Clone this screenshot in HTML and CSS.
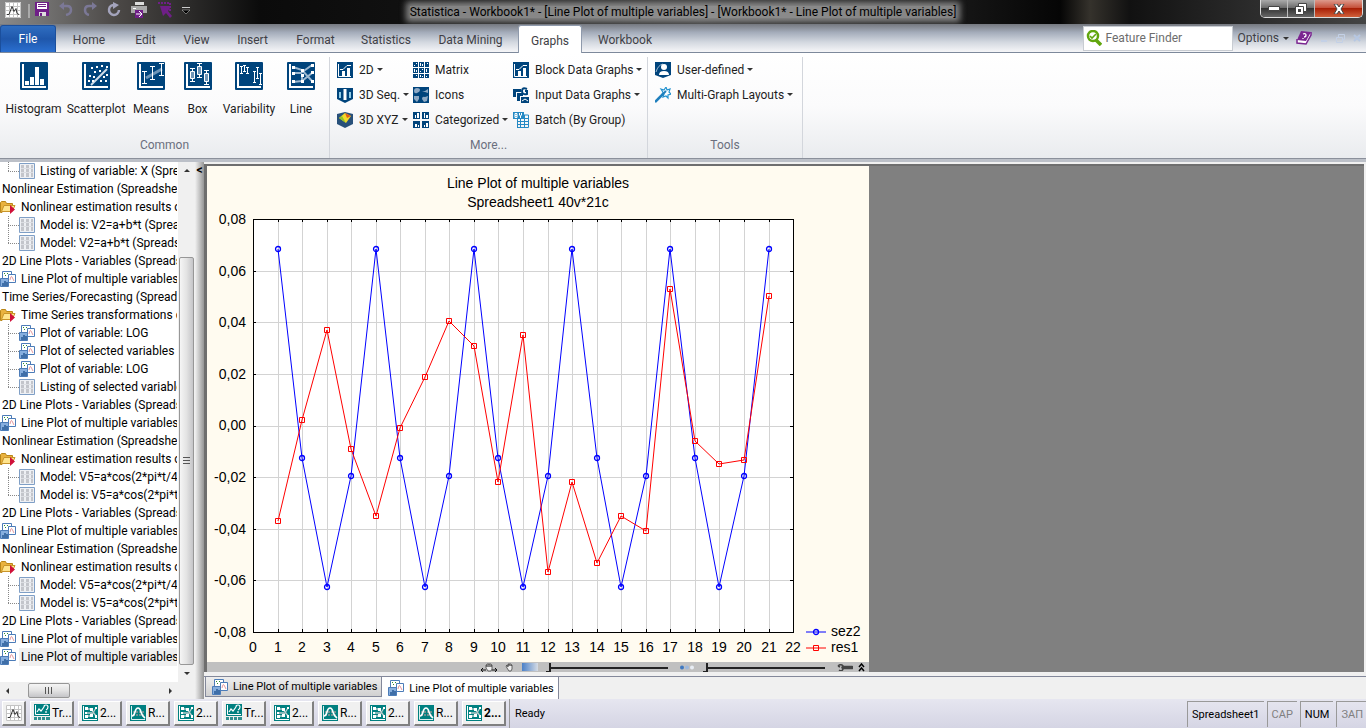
FILE: index.html
```
<!DOCTYPE html>
<html lang="en">
<head>
	<meta charset="utf-8">
	<title>Statistica - Workbook1*</title>
	<link rel="stylesheet" href="styles.css">
</head>
<body>
	<!-- shared icons -->
	<svg class="sprite" aria-hidden="true">
		<symbol id="app" viewBox="0 0 16 16">
			<rect x="0" y="0" width="16" height="16" fill="#fff"/>
			<path d="M.5 .5h15v15H.5zM4.500 0v16M8.500 0v16M12.500 0v16M0 4.500h16M0 8.500h16M0 12.500h16" fill="none" stroke="#c4c4c4"/>
			<path d="M2 12.500h2l3-8 2 5 2-3 1 5 2 1" fill="none" stroke="#333"/>
		</symbol>
		<symbol id="sheet" viewBox="0 0 16 16">
			<path d="M.5 .5h15v15H.5z" fill="#eef0f4" stroke="#7f9fc6"/>
			<path d="M2 2h3v12H2zM7 2h3v12H7zM12 2h2v12h-2z" fill="#c3c5cb"/>
			<path d="M2 5.500h12M2 9.500h12" stroke="#dcdee3"/>
		</symbol>
		<symbol id="folder" viewBox="0 0 16 16">
			<path d="M.5 3.500l1-1h4l1 2h6v3H5l-3 6H.5z" fill="#e9b23f" stroke="#b98619"/>
			<path d="M4 6.500h11l-3 6H1.500z" fill="#ffe48c" stroke="#c8942a"/>
			<path d="M10 6v9l5-4.500z" fill="#d0103a"/>
		</symbol>
		<symbol id="plot" viewBox="0 0 16 16">
			<path d="M2.500 .5h9v9h-9z" fill="#fff" stroke="#4c7cb8"/>
			<path d="M4 2h1v1H4zM7 2h1v1H7zM5 4h1v1H5zM9 4h1v1H9z" fill="#2f8f2f"/>
			<path d="M8.500 3.500h7v8h-7z" fill="#fff" stroke="#4c7cb8"/>
			<path d="M10 9q1-5 2-3t2 4" fill="none" stroke="#e59a9f"/>
			<path d="M.5 7.500h8v8h-8z" fill="#86aede" stroke="#4c7cb8"/>
			<path d="M2 12h2v3H2zM4 10h2v5H4zM6 11h2v4H6z" fill="#3f6fa8"/>
		</symbol>
		<symbol id="t-trend" viewBox="0 0 16 18">
			<path d="M0 0h16v12H0z" fill="#008080"/>
			<path d="M1.500 1v9.500H15" fill="none" stroke="#fff"/>
			<path d="M3 8l2-3 2 2 3-4M10 3q0-2 2-2t2 2-2 3M12 7v2" fill="none" stroke="#fff" stroke-width="1.200"/>
			<path d="M0 13h3v3H0zM4 13h3v3H4zM8 13h3v3H8zM12 13h4v3h-4z" fill="#2f8f8f"/>
		</symbol>
		<symbol id="t-line" viewBox="0 0 16 16">
			<path d="M0 0h16v16H0z" fill="#008080"/>
			<path d="M1.500 1v13.500H15" fill="none" stroke="#fff"/>
			<path d="M4 4h5l5 7M4 11h5l5-8M4 8h6" fill="none" stroke="#b7c9c9" stroke-width="1.300"/>
			<path d="M3 2h3v3H3zM3 7h2v2H3zM3 10h3v3H3zM8 3h3v3H8zM8 9h3v3H8zM13 2h2v2h-2zM13 10h2v3h-2z" fill="#fff"/>
		</symbol>
		<symbol id="t-curve" viewBox="0 0 16 16">
			<path d="M0 0h16v16H0z" fill="#008080"/>
			<path d="M1.500 1v13.500H15" fill="none" stroke="#dcefef"/>
			<path d="M3 7h12M3 10h12" stroke="#6f8f8f" stroke-width="2" stroke-dasharray="2 1"/>
			<path d="M2 11q2 0 3-4t3-4 3 4 4 6" fill="none" stroke="#fff" stroke-width="1.600"/>
		</symbol>
		<symbol id="two-d" viewBox="0 0 16 16">
			<path d="M0 0h16v16H0z" fill="#00447c"/>
			<path d="M1.500 2v12.500H14" fill="none" stroke="#fff"/>
			<path d="M5 9h3v5H5zM10 6h3v8h-3z" fill="#fff"/>
			<path d="M3 7.500h3l4-4h4" fill="none" stroke="#fff"/>
		</symbol>
	</svg>

	<header class="titlebar">
		<div class="quick">
			<button class="tool" aria-label="Statistica"><svg width="16" height="16"><use href="#app"/></svg></button>
			<span class="quick-sep"></span>
			<button class="tool" aria-label="Save"><svg width="14" height="15" viewBox="0 0 14 15"><path d="M0 0h14v14H0z" fill="#6f1f87"/><path d="M2 1h10v6H2z" fill="#fff"/><path d="M3 2.500h8M3 4.500h8" stroke="#6f1f87"/><path d="M4 10h7v4H4z" fill="#ddd"/><path d="M5 11h2v3H5z" fill="#6f1f87"/></svg></button>
			<button class="tool" aria-label="Undo"><svg width="14" height="14" viewBox="0 0 14 14"><path d="M2 4h6q4 0 4 4t-5 5" fill="none" stroke="#7b7896" stroke-width="2.500"/><path d="M0 4l5-4v8z" fill="#7b7896"/></svg></button>
			<button class="tool" aria-label="Redo"><svg width="14" height="14" viewBox="0 0 14 14"><path d="M12 4H6q-4 0-4 4t4 5" fill="none" stroke="#7b7896" stroke-width="2.500"/><path d="M14 4L9 0v8z" fill="#7b7896"/></svg></button>
			<button class="tool" aria-label="Repeat"><svg width="14" height="15" viewBox="0 0 14 15"><path d="M8 3a5 5 0 1 0 4 5" fill="none" stroke="#a3a3bb" stroke-width="2.500"/><path d="M6 0l6 3-6 4z" fill="#a3a3bb"/></svg></button>
			<button class="tool" aria-label="Print"><svg width="16" height="16" viewBox="0 0 16 16"><path d="M0 4h16v7H0z" fill="#a9a9a9"/><path d="M4 0h9v3H4z" fill="#ddd"/><path d="M2 6.500h3" stroke="#fff"/><path d="M4 8h8v8H4z" fill="#6f1f87"/><path d="M5 12h5M8 9l3 3-3 3" fill="none" stroke="#fff"/></svg></button>
			<button class="tool" aria-label="Select"><svg width="15" height="16" viewBox="0 0 15 16"><path d="M1 1h12v8" fill="none" stroke="#6f1f87" stroke-width="2" stroke-dasharray="2 1"/><path d="M3 4h10v2L11 9l4 5-2 2-4-5-3 3z" fill="#6f1f87"/></svg></button>
			<button class="tool more" aria-label="Customize"><svg width="8" height="7" viewBox="0 0 8 7"><path d="M0 .5h8" stroke="#ccc"/><path d="M0 3h8L4 7z" fill="#000" stroke="#ccc" stroke-width=".5"/></svg></button>
		</div>
		<h1 class="title">Statistica - Workbook1* - [Line Plot of multiple variables] - [Workbook1* - Line Plot of multiple variables]</h1>
		<div class="win-buttons">
			<button class="win" aria-label="Minimize"><svg width="12" height="5" viewBox="0 0 12 5"><path d="M.5 .5h11v4H.5z" fill="#fff" stroke="#444"/></svg></button>
			<button class="win" aria-label="Restore"><svg width="12" height="12" viewBox="0 0 12 12"><path d="M3.500 .5h8v8h-8z" fill="#fff" stroke="#444"/><path d="M.5 3.500h8v8h-8z" fill="#fff" stroke="#444"/><path d="M3 6h3v3H3z" fill="#444"/></svg></button>
			<button class="win win-close" aria-label="Close"><svg width="12" height="10" viewBox="0 0 12 10"><path d="M1 0h3l2 3 2-3h3L8 5l3 5H8L6 7l-2 3H1l3-5z" fill="#fff" stroke="#444"/></svg></button>
		</div>
	</header>

	<nav class="tabs">
		<div class="tab-list">
			<button class="tab tab-file">File</button>
			<button class="tab">Home</button>
			<button class="tab">Edit</button>
			<button class="tab">View</button>
			<button class="tab">Insert</button>
			<button class="tab">Format</button>
			<button class="tab">Statistics</button>
			<button class="tab">Data Mining</button>
			<button class="tab tab-active">Graphs</button>
			<button class="tab">Workbook</button>
		</div>
		<div class="tab-tools">
			<label class="finder">
				<svg width="16" height="16" viewBox="0 0 16 16"><circle cx="7" cy="6" r="5" fill="#fff" stroke="#61a60e" stroke-width="2.500"/><path d="M10 10l5 5" stroke="#61a60e" stroke-width="3.500"/><path d="M4 6l2 2 4-4" fill="none" stroke="#61a60e" stroke-width="1.600"/></svg>
				<input type="text" placeholder="Feature Finder" aria-label="Feature Finder">
			</label>
			<button class="options">Options<i class="caret"></i></button>
			<button class="tool" aria-label="Help"><svg width="16" height="14" viewBox="0 0 16 14"><path d="M1 8v4l9 1 5-9V1" fill="#fff" stroke="#7a2590" stroke-width="1.500"/><path d="M5 0l10 1-5 9-9-1z" fill="#7a2590"/><path d="M7 3q3-1 3 1t-2 2M7 7v1" fill="none" stroke="#fff" stroke-width="1.300"/></svg></button>
			<button class="tool child" aria-label="Minimize document"><svg width="8" height="9" viewBox="0 0 8 9"><path d="M1 7h6" stroke="#c3d0e6" stroke-width="2"/></svg></button>
			<button class="tool child" aria-label="Restore document"><svg width="9" height="9" viewBox="0 0 9 9"><path d="M2.500 3V.5h6v5H6M.5 3.500h6v5h-6z" fill="none" stroke="#c3d0e6"/></svg></button>
			<button class="tool child" aria-label="Close document"><svg width="8" height="8" viewBox="0 0 8 8"><path d="M1 1l6 6M7 1L1 7" stroke="#b6c7e2" stroke-width="2"/></svg></button>
		</div>
	</nav>

	<section class="ribbon">
		<div class="group group-common">
			<div class="big-row">
				<button class="big">
					<svg width="28" height="28" viewBox="0 0 28 28"><rect width="28" height="28" rx="1" fill="#00447c"/><path d="M3 2v23h23" fill="none" stroke="#fff" stroke-width="2"/><path d="M5 19h4v4H5zM10 15h4v8h-4zM15 5h4v18h-4zM20 17h4v6h-4z" fill="#fff"/></svg>
					<span>Histogram</span>
				</button>
				<button class="big">
					<svg width="28" height="28" viewBox="0 0 28 28"><rect width="28" height="28" rx="1" fill="#00447c"/><path d="M3 2v23h23" fill="none" stroke="#fff" stroke-width="2"/><path d="M9 23L25 7" stroke="#cfdde9" stroke-width="2"/><path d="M9 5h2v2H9zM14 4h2v2h-2zM19 3h2v2h-2zM24 4h2v2h-2zM12 9h2v2h-2zM17 8h2v2h-2zM7 13h2v2H7zM11 14h2v2h-2zM6 18h2v2H6zM10 18h2v2h-2zM18 18h2v2h-2zM21 14h2v2h-2zM24 12h2v2h-2zM23 18h2v2h-2z" fill="#fff"/></svg>
					<span>Scatterplot</span>
				</button>
				<button class="big">
					<svg width="28" height="28" viewBox="0 0 28 28"><rect width="28" height="28" rx="1" fill="#00447c"/><path d="M3 2v23h23" fill="none" stroke="#fff" stroke-width="2"/><path d="M9 16l16-9" stroke="#6f96b8" stroke-width="3"/><path d="M5 9.500h5M5 21.500h5M7.500 9v12M13 4.500h5M13 17.500h5M15.500 4v13M22 1.500h5M22 13.500h5M24.500 1v12" stroke="#fff"/></svg>
					<span>Means</span>
				</button>
				<button class="big">
					<svg width="28" height="28" viewBox="0 0 28 28"><rect width="28" height="28" rx="1" fill="#00447c"/><path d="M3 2v23h23" fill="none" stroke="#fff" stroke-width="2"/><path d="M6 6.500h5M6 19.500h5M8.500 6v13M13 1.500h5M13 15.500h5M15.500 1v14M20 8.500h5M20 22.500h5M22.500 8v14" stroke="#fff"/><path d="M6.500 9.500h4v7h-4zM13.500 4.500h4v8h-4zM20.500 11.500h4v8h-4z" fill="#6f96b8" stroke="#fff"/></svg>
					<span>Box</span>
				</button>
				<button class="big">
					<svg width="28" height="28" viewBox="0 0 28 28"><rect width="28" height="28" rx="1" fill="#00447c"/><path d="M3 2v23h23" fill="none" stroke="#fff" stroke-width="2"/><path d="M5 4.500h3M5 11.500h3M6.500 4v7M8 3.500h3M8 9.500h3M9.500 3v7M11 5.500h3M11 11.500h3M12.500 5v7M18 9.500h3M18 20.500h3M19.500 9v12M21 5.500h3M21 16.500h3M22.500 5v12M24 11.500h3M24 22.500h3M25.500 11v12" stroke="#fff"/></svg>
					<span>Variability</span>
				</button>
				<button class="big">
					<svg width="28" height="28" viewBox="0 0 28 28"><rect width="28" height="28" rx="1" fill="#00447c"/><path d="M3 2v23h23" fill="none" stroke="#fff" stroke-width="2"/><path d="M6 5l9 3 10 11M6 11h8l11-8M6 20l9-1 10-8M15 12l0 7" fill="none" stroke="#9cb8d0" stroke-width="2"/><path d="M5 4h3v3H5zM5 10h3v3H5zM5 18h3v3H5zM14 7h3v3h-3zM14 12h3v3h-3zM14 18h3v3h-3zM24 2h3v3h-3zM24 9h3v3h-3zM24 18h3v3h-3z" fill="#fff"/></svg>
					<span>Line</span>
				</button>
			</div>
			<h2>Common</h2>
		</div>
		<div class="group group-more">
			<div class="small-grid">
				<button class="small"><svg width="16" height="16"><use href="#two-d"/></svg>2D<i class="caret"></i></button>
				<button class="small"><svg width="16" height="16" viewBox="0 0 16 16"><path d="M0 0h5v5H0zM6 0h5v5H6zM12 0h4v5h-4zM0 6h5v5H0zM6 6h5v5H6zM12 6h4v5h-4zM0 12h5v4H0zM6 12h5v4H6zM12 12h4v4h-4z" fill="#00447c"/><path d="M3 1h1v1H3zM1 3h1v1H1zM7 1h1v3H7zM9 2h1v2H9zM14 1h1v1h-1zM1 7h1v3H1zM3 8h1v2H3zM9 7h1v1H9zM7 9h1v1H7zM13 7h1v3h-1zM3 13h1v1H3zM7 13h1v2H7zM9 14h1v1H9zM13 14h1v1h-1z" fill="#fff"/></svg>Matrix</button>
				<button class="small"><svg width="16" height="16"><use href="#two-d"/></svg>Block Data Graphs<i class="caret"></i></button>
				<button class="small"><svg width="16" height="16" viewBox="0 0 16 16"><path d="M0 1h16v11l-8 4-8-4z" fill="#00447c"/><path d="M3 5v6M13 5v6" stroke="#8fcbe6" stroke-width="2"/><path d="M8 2v11" stroke="#fff" stroke-width="3"/></svg>3D Seq.<i class="caret"></i></button>
				<button class="small"><svg width="16" height="16" viewBox="0 0 16 16"><path d="M0 0h16v16H0z" fill="#00447c"/><path d="M1 4q0-3 3-3t3 2-3 3-3-2M9 4h3l3-2v4l-3-1zM1 9h5v3l-2 3-3-3zM9 12q0-3 3-2l3-1-1 5-3 1z" fill="#8ea9c4"/></svg>Icons</button>
				<button class="small"><svg width="16" height="16" viewBox="0 0 16 16"><path d="M0 2h8v3H3v5H0zM4 6h6v3H7v5H4zM8 10h8v6H8z" fill="#00447c"/><path d="M14 2q-5-2-5 2t5 3V4h-2" fill="none" stroke="#00447c" stroke-width="2"/><path d="M9 14l3-2 3 2" fill="none" stroke="#fff"/></svg>Input Data Graphs<i class="caret"></i></button>
				<button class="small"><svg width="16" height="16" viewBox="0 0 16 16"><path d="M0 2l8-2 8 2v10l-8 4-8-4z" fill="#28507a"/><path d="M2 6l6-5 6 3-5 7z" fill="#f4d92a"/><path d="M8 1l6 3-4 2z" fill="#e0601c"/><path d="M2 6l3-2 4 7z" fill="#8fc42c"/></svg>3D XYZ<i class="caret"></i></button>
				<button class="small"><svg width="16" height="16" viewBox="0 0 16 16"><path d="M0 0h7v7H0zM9 0h7v7H9zM0 9h7v7H0zM9 9h7v7H9z" fill="#00447c"/><path d="M2 3h1v3H2zM4 1h2v5H4zM11 1h1v5h-1zM13 3h2v3h-2zM2 12h2v3H2zM5 13h1v2H5zM11 13h1v2h-1zM13 11h2v4h-2z" fill="#fff"/></svg>Categorized<i class="caret"></i></button>
				<button class="small"><svg width="16" height="16" viewBox="0 0 16 16"><path d="M4 3h11.500v12.500H4M4 6.500h11M4 9.500h11M4 12.500h11M7.500 3v12M11.500 3v12M4.500 7v8" fill="none" stroke="#2589c4"/><path d="M0 0h11v7H0z" fill="#2589c4"/><path d="M2 1.500h2v4H2zM2 3.500h2M6.500 1v2l1 1 1-1V1M7.500 4v2" fill="none" stroke="#fff"/></svg>Batch (By Group)</button>
			</div>
			<h2>More...</h2>
		</div>
		<div class="group group-tools">
			<div class="small-list">
				<button class="small"><svg width="16" height="16" viewBox="0 0 16 16"><path d="M0 0h16v13l-8 3-8-3z" fill="#00447c"/><path d="M1 10q2-7 7-8" fill="none" stroke="#9cb8d0"/><circle cx="9" cy="5" r="3" fill="#fff"/><path d="M4 13q0-4 5-4t5 4z" fill="#fff"/></svg>User-defined<i class="caret"></i></button>
				<button class="small"><svg width="16" height="16" viewBox="0 0 16 16"><path d="M0 15l9-9" stroke="#1f7fbd" stroke-width="2.500"/><path d="M6 2l3 1 2-3 1 3 3-1-1 3 2 2-3 1v3l-2-2-3 1 1-3z" fill="#fff" stroke="#2593cf" stroke-width="1.200"/><path d="M7 8l4-4" stroke="#1f7fbd" stroke-width="2"/></svg>Multi-Graph Layouts<i class="caret"></i></button>
			</div>
			<h2>Tools</h2>
		</div>
	</section>

	<main class="workspace">
		<aside class="side">
			<ul class="tree">
				<li class="leaf last"><i class="branch"></i><svg><use href="#sheet"/></svg>Listing of variable: X (Spre</li>
				<li class="root">Nonlinear Estimation (Spreadshee</li>
				<li><svg><use href="#folder"/></svg>Nonlinear estimation results o</li>
				<li class="leaf"><i class="branch"></i><svg><use href="#sheet"/></svg>Model is: V2=a+b*t (Sprea</li>
				<li class="leaf last"><i class="branch"></i><svg><use href="#sheet"/></svg>Model: V2=a+b*t (Spreads</li>
				<li class="root">2D Line Plots - Variables (Spreads</li>
				<li><svg><use href="#plot"/></svg>Line Plot of multiple variables</li>
				<li class="root">Time Series/Forecasting (Spreads</li>
				<li><svg><use href="#folder"/></svg>Time Series transformations d</li>
				<li class="leaf"><i class="branch"></i><svg><use href="#plot"/></svg>Plot of variable: LOG</li>
				<li class="leaf"><i class="branch"></i><svg><use href="#plot"/></svg>Plot of selected variables (</li>
				<li class="leaf"><i class="branch"></i><svg><use href="#plot"/></svg>Plot of variable: LOG</li>
				<li class="leaf last"><i class="branch"></i><svg><use href="#sheet"/></svg>Listing of selected variable</li>
				<li class="root">2D Line Plots - Variables (Spreads</li>
				<li><svg><use href="#plot"/></svg>Line Plot of multiple variables</li>
				<li class="root">Nonlinear Estimation (Spreadshee</li>
				<li><svg><use href="#folder"/></svg>Nonlinear estimation results o</li>
				<li class="leaf"><i class="branch"></i><svg><use href="#sheet"/></svg>Model: V5=a*cos(2*pi*t/4)</li>
				<li class="leaf last"><i class="branch"></i><svg><use href="#sheet"/></svg>Model is: V5=a*cos(2*pi*t/</li>
				<li class="root">2D Line Plots - Variables (Spreads</li>
				<li><svg><use href="#plot"/></svg>Line Plot of multiple variables</li>
				<li class="root">Nonlinear Estimation (Spreadshee</li>
				<li><svg><use href="#folder"/></svg>Nonlinear estimation results o</li>
				<li class="leaf"><i class="branch"></i><svg><use href="#sheet"/></svg>Model: V5=a*cos(2*pi*t/4)</li>
				<li class="leaf last"><i class="branch"></i><svg><use href="#sheet"/></svg>Model is: V5=a*cos(2*pi*t/</li>
				<li class="root">2D Line Plots - Variables (Spreads</li>
				<li><svg><use href="#plot"/></svg>Line Plot of multiple variables</li>
				<li><svg><use href="#plot"/></svg><span class="selected">Line Plot of multiple variables</span></li>
			</ul>
			<div class="vbar">
				<i class="arrow up"></i>
				<div class="vtrack"><div class="vthumb"><i class="grip"></i></div></div>
				<i class="arrow down"></i>
			</div>
			<div class="hbar">
				<i class="arrow left"></i>
				<div class="htrack"><div class="hthumb"><i class="grip grip-h"></i></div></div>
				<i class="arrow right"></i>
			</div>
		</aside>
		<button class="splitter" aria-label="Collapse tree">&lt;</button>
		<section class="document">
			<div class="canvas">
				<div class="graph">
					<svg class="chart" width="662" height="496" viewBox="0 0 662 496">
						<defs>
							<marker id="dot" markerWidth="8" markerHeight="8" refX="4" refY="4" markerUnits="userSpaceOnUse"><circle cx="4" cy="4" r="2.500" fill="none" stroke="#00f" stroke-width="1.300"/></marker>
							<marker id="box" markerWidth="8" markerHeight="8" refX="4" refY="4" markerUnits="userSpaceOnUse"><path d="M1.500 1.500h5v5h-5z" fill="none" stroke="#f00"/></marker>
						</defs>
						<g class="chart-title">
							<text x="331" y="22">Line Plot of multiple variables</text>
							<text x="331" y="41">Spreadsheet1 40v*21c</text>
						</g>
						<path class="area" d="M46 53h540v413H46z"/>
						<path class="grid-lines" d="M71 53v413M95 53v413M120 53v413M144 53v413M169 53v413M193 53v413M218 53v413M242 53v413M267 53v413M291 53v413M316 53v413M341 53v413M365 53v413M390 53v413M414 53v413M439 53v413M463 53v413M488 53v413M512 53v413M537 53v413M562 53v413M46 105h540M46 156h540M46 208h540M46 260h540M46 311h540M46 363h540M46 414h540"/>
						<path class="frame" d="M46 53h540v413H46z"/>
						<path class="frame" d="M71 463v3M95 463v3M120 463v3M144 463v3M169 463v3M193 463v3M218 463v3M242 463v3M267 463v3M291 463v3M316 463v3M341 463v3M365 463v3M390 463v3M414 463v3M439 463v3M463 463v3M488 463v3M512 463v3M537 463v3M562 463v3M71 53v3M95 53v3M120 53v3M144 53v3M169 53v3M193 53v3M218 53v3M242 53v3M267 53v3M291 53v3M316 53v3M341 53v3M365 53v3M390 53v3M414 53v3M439 53v3M463 53v3M488 53v3M512 53v3M537 53v3M562 53v3M46 105h3M46 156h3M46 208h3M46 260h3M46 311h3M46 363h3M46 414h3M583 105h3M583 156h3M583 208h3M583 260h3M583 311h3M583 363h3M583 414h3"/>
						<polyline class="sez" points="71,83 95,292 120,421 144,310 169,83 193,292 218,421 242,310 267,83 291,292 316,421 341,310 365,83 390,292 414,421 439,310 463,83 488,292 512,421 537,310 562,83"/>
						<polyline class="res" points="71,355 95,254 120,164 144,283 169,350 193,262 218,211 242,155 267,180 291,316 316,169 341,406 365,316 390,397 414,350 439,365 463,123 488,275 512,298 537,294 562,130"/>
						<g class="y-labels">
							<text x="39" y="58">0,08</text>
							<text x="39" y="110">0,06</text>
							<text x="39" y="161">0,04</text>
							<text x="39" y="213">0,02</text>
							<text x="39" y="264">0,00</text>
							<text x="39" y="316">-0,02</text>
							<text x="39" y="368">-0,04</text>
							<text x="39" y="419">-0,06</text>
							<text x="39" y="471">-0,08</text>
						</g>
						<g class="x-labels">
							<text x="46" y="486">0</text><text x="71" y="486">1</text><text x="95" y="486">2</text><text x="120" y="486">3</text>
							<text x="144" y="486">4</text><text x="169" y="486">5</text><text x="193" y="486">6</text><text x="218" y="486">7</text>
							<text x="242" y="486">8</text><text x="267" y="486">9</text><text x="291" y="486">10</text><text x="316" y="486">11</text>
							<text x="341" y="486">12</text><text x="365" y="486">13</text><text x="390" y="486">14</text><text x="414" y="486">15</text>
							<text x="439" y="486">16</text><text x="463" y="486">17</text><text x="488" y="486">18</text><text x="512" y="486">19</text>
							<text x="537" y="486">20</text><text x="562" y="486">21</text><text x="586" y="486">22</text>
						</g>
						<polyline class="sez legend-line" points="599,466 609,466 619,466"/>
						<polyline class="res legend-line" points="599,482 609,482 619,482"/>
						<text x="624" y="470">sez2</text>
						<text x="624" y="486">res1</text>
					</svg>
					<div class="graph-tools">
						<button class="tool" aria-label="Pan"><svg width="16" height="9" viewBox="0 0 16 9"><path d="M5 5V2h1v2V1h2v3V1h2v3V2h1v4l-1 2H7z" fill="#eee" stroke="#444" stroke-width=".8"/><path d="M0 7h5M11 7h5M2 5L0 7l2 2M14 5l2 2-2 2" fill="none" stroke="#111"/></svg></button>
						<button class="tool hand" aria-label="Hand"><svg width="9" height="9" viewBox="0 0 9 9"><path d="M2 5L1 3l1-1 1 2V1h1v2-2h2v2-1h1v4L6 8H4z" fill="#eee" stroke="#444" stroke-width=".8"/></svg></button>
						<span class="shade"></span>
						<input class="slider" type="range" value="0" aria-label="Transparency">
						<svg class="dots" width="15" height="5" viewBox="0 0 15 5"><circle cx="2" cy="2.500" r="2" fill="#3f78c0"/><circle cx="7" cy="2.500" r="2" fill="#9db8dc"/><circle cx="12" cy="2.500" r="2" fill="#e8edf4"/></svg>
						<input class="slider" type="range" value="0" aria-label="Density">
						<button class="tool wrench" aria-label="Settings"><svg width="16" height="7" viewBox="0 0 16 7"><path d="M6 3.500h9" stroke="#444" stroke-width="3.500" stroke-linecap="round"/><path d="M1 2q2-2 4-1t1 4-4 1M1 2l2 1" fill="none" stroke="#444" stroke-width="1.500"/></svg></button>
						<button class="tool" aria-label="Collapse"><svg width="7" height="9" viewBox="0 0 7 9"><path d="M1 4l2.500-3L6 4M1 8l2.500-3L6 8" fill="none" stroke="#000" stroke-width="1.500"/></svg></button>
					</div>
				</div>
			</div>
			<div class="doc-tabs">
				<button class="doc-tab"><svg width="16" height="16"><use href="#plot"/></svg>Line Plot of multiple variables</button>
				<button class="doc-tab doc-active"><svg width="16" height="16"><use href="#plot"/></svg>Line Plot of multiple variables</button>
			</div>
		</section>
	</main>

	<footer class="status">
		<button class="task task-app" aria-label="Statistica"><svg width="16" height="16"><use href="#app"/></svg></button>
		<button class="task"><svg width="16" height="18"><use href="#t-trend"/></svg>Tr...</button>
		<button class="task"><svg width="16" height="16"><use href="#t-line"/></svg>2...</button>
		<button class="task"><svg width="16" height="16"><use href="#t-curve"/></svg>R...</button>
		<button class="task"><svg width="16" height="16"><use href="#t-line"/></svg>2...</button>
		<button class="task"><svg width="16" height="18"><use href="#t-trend"/></svg>Tr...</button>
		<button class="task"><svg width="16" height="16"><use href="#t-line"/></svg>2...</button>
		<button class="task"><svg width="16" height="16"><use href="#t-curve"/></svg>R...</button>
		<button class="task"><svg width="16" height="16"><use href="#t-line"/></svg>2...</button>
		<button class="task"><svg width="16" height="16"><use href="#t-curve"/></svg>R...</button>
		<button class="task task-current"><svg width="16" height="16"><use href="#t-line"/></svg>2...</button>
		<span class="ready">Ready</span>
		<span class="pane">Spreadsheet1</span>
		<span class="pane off">CAP</span>
		<span class="pane">NUM</span>
		<span class="pane off">ЗАП</span>
	</footer>
</body>
</html>
```
FILE: styles.css
```
*{
	margin: 0;
	padding: 0;
	box-sizing: border-box;
}
body{
	display: flex;
	flex-direction: column;
	height: 100vh;
	overflow: hidden;
	font: 12px Roboto, "Open Sans", sans-serif;
	color: #1e1e1e;
	background: #f0f0f0;
}
button{
	font: inherit;
	color: inherit;
	background: none;
	border: 0;
	white-space: nowrap;
}
svg{
	display: block;
	flex: none;
}
.sprite{
	position: absolute;
	width: 0;
	height: 0;
}
.caret{
	display: inline-block;
	border: solid 3px transparent;
	border-top-color: #333;
	border-bottom: 0;
}

/* title bar */
.titlebar{
	display: grid;
	grid-template-columns: 1fr auto 1fr;
	height: 24px;
	background: linear-gradient(90deg, #8a8a8a 0, #4a4745 120px, #2b2a29 190px, #0b0b0b 260px, #111 420px, #333 700px, #161616 960px, #050505 1060px, #35322c 1090px, #111 1130px, #444 100%);
}
.quick{
	display: flex;
	align-items: flex-start;
	gap: 10px;
	padding: 2px 0 0 5px;
}
.quick-sep{
	width: 2px;
	height: 14px;
	margin: 2px -5px 0 -3px;
	background: #aaa;
}
.more{
	margin-top: 5px;
}
.title{
	align-self: center;
	height: 12px;
	font-size: 12px;
	font-weight: normal;
	line-height: 12px;
	white-space: nowrap;
	color: #000;
	background: rgba(180,180,180,.7);
	box-shadow: 0 0 6px 4px rgba(180,180,180,.7);
}
.win-buttons{
	display: flex;
	justify-self: end;
	height: 18px;
	margin-right: 3px;
	border: solid 1px #ddd;
	border-top: 0;
	border-radius: 0 0 5px 5px;
	overflow: hidden;
}
.win{
	display: grid;
	place-items: center;
	width: 27px;
	border-right: solid 1px #bbb;
	background: linear-gradient(#aaa, #666 50%, #333 50%, #666);
}
.win-close{
	width: 47px;
	border-right: 0;
	background: linear-gradient(#dd9a8c, #c5503a 45%, #a81f06 50%, #d0603a);
}

/* ribbon tabs */
.tabs{
	display: flex;
	justify-content: space-between;
	height: 29px;
	border-bottom: solid 1px #7d899b;
	background: linear-gradient(#75787f, #a4acba 30%, #d3d8e0 65%, #f6f6f8);
	color: #3f3f46;
}
.tab-list{
	display: grid;
	grid-template-columns: 57px 64px 49px 53px 59px 67px 74px 95px 64px 86px;
	padding-top: 1px;
}
.tab{
	padding-top: 2px;
}
.tab-file{
	margin-right: 1px;
	padding: 0;
	color: #fff;
	border: solid 1px #1b4f9c;
	border-bottom: 0;
	border-radius: 3px 3px 0 0;
	background: linear-gradient(#2f6dc0, #1f57ab 50%, #2a6fd0);
}
.tab-active{
	margin-bottom: -1px;
	border: solid 1px #8f9aac;
	border-bottom: 0;
	border-radius: 3px 3px 0 0;
	background: #fff;
}
.tab-tools{
	display: flex;
	align-items: center;
	gap: 4px;
	padding-right: 5px;
}
.finder{
	display: flex;
	align-items: center;
	gap: 3px;
	width: 150px;
	height: 25px;
	padding-left: 2px;
	border: solid 1px #c8ccd2;
	background: #fff;
}
.finder input{
	width: 120px;
	border: 0;
	outline: 0;
	font: inherit;
	background: none;
}
.finder input::placeholder{
	color: #6d6d6d;
	opacity: 1;
}
.options{
	display: flex;
	align-items: center;
	gap: 4px;
	margin-right: 3px;
}
.child{
	margin-left: 4px;
}

/* ribbon */
.ribbon{
	display: flex;
	height: 109px;
	padding: 4px 0 0;
	border-bottom: solid 3px #bcc0c8;
	box-shadow: inset 0 -1px #8b909b;
	background: linear-gradient(#fff, #fbfbfc 50%, #e9ebee);
}
.group{
	display: flex;
	flex-direction: column;
	justify-content: space-between;
	border-right: solid 1px #d3d6dc;
	margin-bottom: 1px;
}
.group h2{
	padding-bottom: 4px;
	font-size: 12px;
	font-weight: normal;
	line-height: 18px;
	text-align: center;
	color: #6b6f7e;
}
.group-common{
	width: 330px;
}
.group-more{
	width: 318px;
}
.group-tools{
	width: 155px;
}
.big-row{
	display: grid;
	grid-template-columns: 61px 64px 46px 47px 56px 48px;
	padding: 5px 0 0 3px;
}
.big{
	display: flex;
	flex-direction: column;
	align-items: center;
	gap: 10px;
	line-height: 18px;
}
.small-grid{
	display: grid;
	grid-template-columns: 76px 100px auto;
	grid-auto-rows: 25px;
	padding-left: 7px;
}
.small-list{
	display: grid;
	grid-auto-rows: 25px;
	padding-left: 7px;
}
.small{
	display: flex;
	align-items: center;
	text-align: left;
}
.small svg{
	margin-right: 6px;
}
.small .caret{
	margin-left: 3px;
}

/* tree */
.workspace{
	display: flex;
	flex: 1;
	min-height: 0;
}
.side{
	display: grid;
	grid-template-columns: 178px 17px;
	grid-template-rows: 1fr 17px;
	color: #000;
	background: #fff;
}
.tree{
	list-style: none;
	overflow: hidden;
	min-height: 0;
	padding-right: 1px;
}
.tree li{
	display: flex;
	align-items: center;
	height: 18px;
	overflow: hidden;
	white-space: nowrap;
}
.tree svg{
	width: 16px;
	height: 16px;
	margin-right: 5px;
}
.tree .root{
	padding-left: 2px;
}
.branch{
	flex: none;
	width: 11px;
	height: 18px;
	margin-left: 8px;
	background: repeating-linear-gradient(90deg, #888 0 1px, transparent 1px 2px) 0 9px / 11px 1px no-repeat, repeating-linear-gradient(#888 0 1px, transparent 1px 2px) 0 0 / 1px 18px no-repeat;
}
.last .branch{
	background-size: 11px 1px, 1px 9px;
}
.selected{
	flex: 1;
	margin-left: -2px;
	padding-left: 2px;
	line-height: 18px;
	background: #f0f0f0;
}
.vbar{
	display: flex;
	flex-direction: column;
	align-items: center;
	background: #f0f0f0;
}
.vtrack{
	flex: 1;
	width: 15px;
	display: flex;
	flex-direction: column;
	justify-content: flex-end;
}
.vthumb{
	display: grid;
	place-items: center;
	height: 84%;
	border: solid 1px #979797;
	border-radius: 2px;
	background: linear-gradient(90deg, #f5f5f5, #e3e3e3 50%, #c5c5c8);
}
.grip{
	width: 7px;
	height: 8px;
	background: repeating-linear-gradient(#555 0 1px, transparent 1px 3px);
}
.grip-h{
	width: 8px;
	height: 7px;
	background: repeating-linear-gradient(90deg, #555 0 1px, transparent 1px 3px);
}
.arrow{
	margin: 7px 6px;
	border: solid 3px transparent;
}
.up{
	border-top: 0;
	border-bottom-color: #333;
}
.down{
	border-bottom: 0;
	border-top-color: #333;
}
.left{
	margin: 5px 6px;
	border-left: 0;
	border-right-color: #333;
}
.right{
	margin: 5px 6px;
	border-right: 0;
	border-left-color: #333;
}
.hbar{
	grid-column: 1 / 3;
	display: flex;
	align-items: center;
	padding-right: 17px;
	background: #f0f0f0;
}
.htrack{
	flex: 1;
	padding-left: 13px;
}
.hthumb{
	display: grid;
	place-items: center;
	width: 42px;
	height: 15px;
	border: solid 1px #979797;
	border-radius: 2px;
	background: linear-gradient(#f5f5f5, #e3e3e3 50%, #c5c5c8);
}
.splitter{
	display: flex;
	justify-content: center;
	width: 9px;
	color: #000;
	font-weight: bold;
	line-height: 16px;
	background: linear-gradient(90deg, #f0f0f0, #c4c4c4 50%, #959595);
}

/* document */
.document{
	display: flex;
	flex: 1;
	flex-direction: column;
	min-width: 0;
}
.canvas{
	flex: 1;
	min-height: 0;
	overflow: hidden;
	margin: 2px 2px 4px 0;
	border: solid #6e6e6e;
	border-width: 2px 0 0 3px;
	background: #808080;
}
.graph{
	width: 662px;
}
.chart{
	background: #fffbf0;
	font: 14px "Liberation Sans", Arial, sans-serif;
	fill: #000;
}
.chart-title,
.x-labels{
	text-anchor: middle;
}
.y-labels{
	text-anchor: end;
}
.area{
	fill: #fff;
}
.grid-lines{
	stroke: #d3d3d3;
	shape-rendering: crispEdges;
}
.frame{
	fill: none;
	stroke: #000;
	shape-rendering: crispEdges;
}
.sez{
	fill: none;
	stroke: #00f;
	marker: url(#dot);
}
.res{
	fill: none;
	stroke: #f00;
	marker: url(#box);
}
.legend-line{
	marker-start: none;
	marker-end: none;
}
.graph-tools{
	display: flex;
	align-items: center;
	justify-content: flex-end;
	height: 10px;
	padding-right: 4px;
	background: #c0c0c0;
}
.hand{
	margin: 0 8px;
}
.shade{
	width: 16px;
	height: 8px;
	margin-right: 8px;
	background: linear-gradient(90deg, #4a80c8, #d5dbe4);
}
.slider{
	appearance: none;
	width: 122px;
	height: 9px;
	background: linear-gradient(#222, #222) 0 4px / 100% 2px no-repeat;
}
.slider::-webkit-slider-thumb{
	appearance: none;
	width: 5px;
	height: 9px;
	border: solid #222;
	border-width: 0 2px 1px 0;
	background: #c0c0c0;
}
.dots{
	margin: 0 8px 0 12px;
}
.wrench{
	margin: 0 5px 0 12px;
}
.doc-tabs{
	display: flex;
	align-items: flex-start;
	height: 23px;
	border-top: solid 1px #83889a;
	background: #f0f0f0;
}
.doc-tab{
	display: flex;
	align-items: center;
	gap: 5px;
	height: 20px;
	margin-left: 1px;
	padding: 0 4px 0 6px;
	border: solid 1px #83889a;
	border-top: 0;
	color: #000;
	font-size: 11px;
	background: linear-gradient(#eee, #d0d0d0);
}
.doc-active{
	height: 22px;
	margin-left: 0;
	border-bottom: 0;
	border-left: 0;
	background: #fff;
}

/* status bar */
.status{
	display: flex;
	align-items: center;
	gap: 4px;
	height: 29px;
	padding-left: 2px;
	font-size: 11px;
	color: #000;
	background: linear-gradient(#e6e6f0, #d5d5e4);
}
.task{
	display: flex;
	align-items: center;
	gap: 2px;
	width: 44px;
	height: 25px;
	padding-left: 3px;
	border: solid 1px #fff;
	border-right: solid 2px #808080;
	border-bottom: solid 2px #808080;
	font-size: 12px;
	background: #f0f0f0;
}
.task-app{
	width: 24px;
}
.task-current{
	font-weight: bold;
}
.ready{
	align-self: stretch;
	flex: 1;
	margin-left: -1px;
	padding-left: 5px;
	border-left: solid 1px #999;
	line-height: 30px;
}
.pane{
	height: 26px;
	padding: 0 4px;
	border: solid #999;
	border-width: 1px 0 0 1px;
	line-height: 26px;
	margin-right: -1px;
}
.off{
	color: #808080;
}
```
